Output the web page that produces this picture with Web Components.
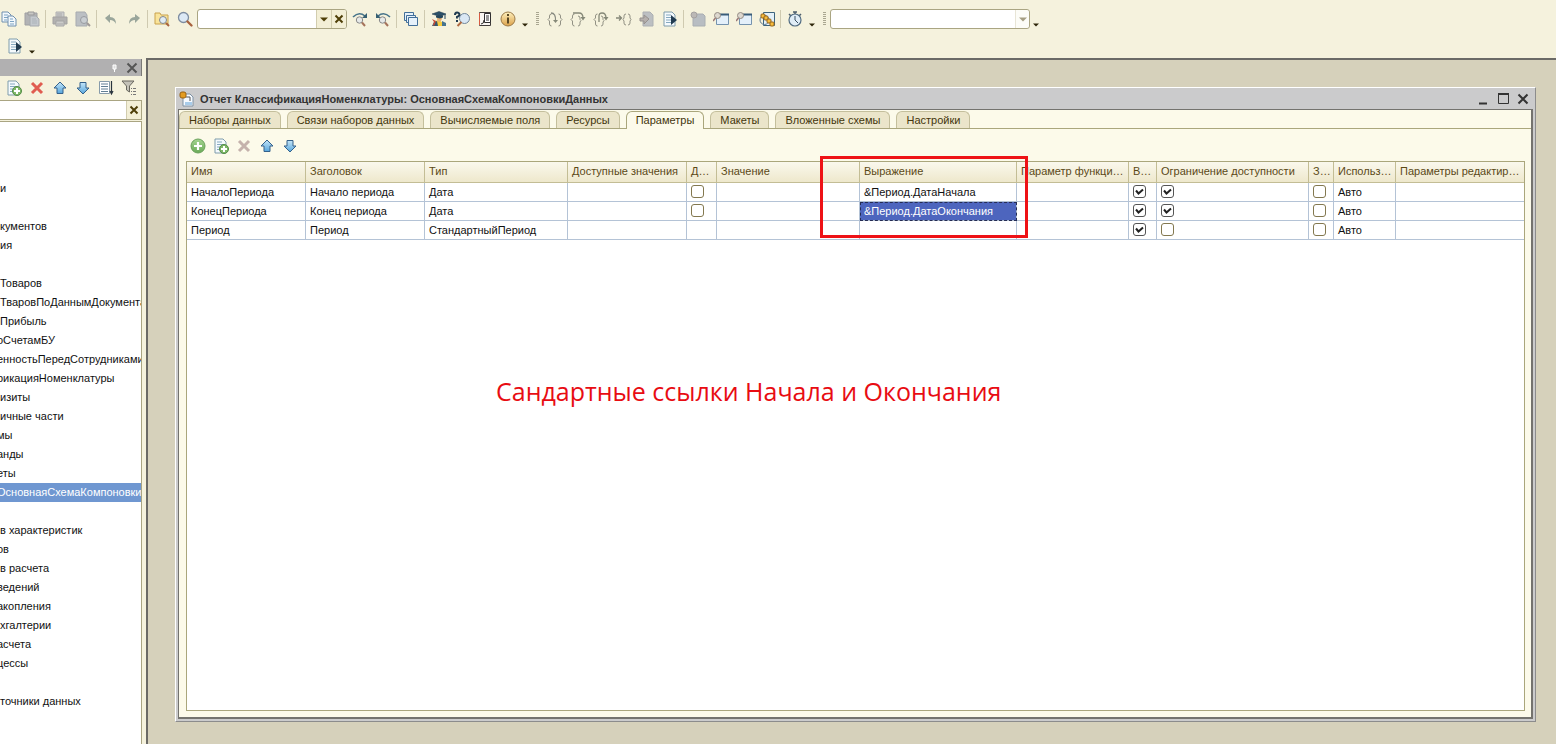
<!DOCTYPE html>
<html lang="ru">
<head>
<meta charset="utf-8">
<title>Конфигуратор</title>
<style>
html,body{margin:0;height:100%}
body{font:11px/13px "Liberation Sans",Arial,sans-serif;color:#111;background:#f5f2dd;overflow:hidden}
</style>
</head>
<body>
<app-shell></app-shell>
<script>
const doc='<path d="M2 1h8l3 3v11H2z" fill="#f5fafd" stroke="#7f9cab"/><path d="M4 4h5M4 6.500h7M4 9h7M4 11.500h7" stroke="#86a9c0"/>';
const plus='<circle cx="11" cy="11" r="4.500" fill="#7fb868" stroke="#528b45"/><path d="M11 8v6M8 11h6" stroke="#fff" stroke-width="2"/>';
const lens='<circle cx="6.500" cy="6.500" r="5" fill="#dce9f5" stroke="#7e8da0" stroke-width="1.300"/><path d="M10.500 10.500l4 4" stroke="#a8623e" stroke-width="2.300" stroke-linecap="round"/>';
const blueUp='M8 2l6 6h-3v5.500H5V8H2z', blueDown='M8 14L2 8h3V2.500h6V8h3z';
const grad='<defs><linearGradient id="b" x2="0" y2="1"><stop stop-color="#c5e6f9"/><stop offset="1" stop-color="#56a5dc"/></linearGradient><linearGradient id="g" x2="0" y2="1"><stop stop-color="#a5d491"/><stop offset="1" stop-color="#6aaa57"/></linearGradient><linearGradient id="o" x2="0" y2="1"><stop stop-color="#fdf0bd"/><stop offset="1" stop-color="#dca24a"/></linearGradient></defs>';
const smallLens='<circle cx="7.500" cy="9" r="3.200" fill="#e6e9e8" stroke="#888"/><path d="M10 11.500l3 3.500" stroke="#a5735b" stroke-width="2"/>';
const braceL='<path d="M4.500 3Q2.500 3 2.500 5v2L1 8.500 2.500 10v3q0 2 2 2" stroke="#929184" fill="none"/>';
const braceR='<path d="M11.500 3q2 0 2 2v2L15 8.500 13.500 10v3q0 2-2 2" stroke="#929184" fill="none"/>';
const braceMid='<path d="M8 5q2 0 2 2v1.500L11 9.500 10 11v2q0 2-2 2" stroke="#929184" fill="none"/>';
const winLens='<path d="M3.500 3.500h12v10h-12z" fill="#e4f0fa" stroke="#7593ae"/><path d="M4 3.500h12" stroke="#395c79" stroke-width="2"/><circle cx="4.500" cy="4.500" r="3" fill="#ddd8cf" stroke="#948c84"/><path d="M2.500 7L0 10" stroke="#977" stroke-width="1.500"/>';
const ICONS={
copy:'<path d="M1 1h6l3 3v7H1z" fill="#f2f8fc" stroke="#6f8fae"/><path d="M3 4h4M3 6.500h4M3 9h3" stroke="#7ca3c3"/><path d="M7 5h5l3 3v7H7z" fill="#f2f8fc" stroke="#6f8fae"/><path d="M9 8h3M9 10.500h4M9 13h4" stroke="#7ca3c3"/>',
paste:'<path d="M1 2h12v12H1z" fill="#b2b3b5" stroke="#9fa0a2"/><path d="M4 1h6v3H4z" fill="#c8c8c5" stroke="#999"/><path d="M6 5h6l3 3v7H6z" fill="#c3c8cd" stroke="#a6aaae"/><path d="M8 8h4M8 10h5M8 12h5" stroke="#acb3b9"/>',
print:'<path d="M4 1h8v6H4z" fill="#ccc" stroke="#b0b0b0"/><path d="M1 6h14v7H1z" fill="#b2b1b0" stroke="#a3a2a1"/><path d="M4 10h8v5H4z" fill="#ccccca" stroke="#a5a5a5"/><path d="M5 3h5M5 5h5M5 13h6" stroke="#a9a9a9"/>',
preview:'<path d="M1 1h9l2 3v11H1z" fill="#bbbfc3" stroke="#a7abaf"/><circle cx="9" cy="9" r="3.500" fill="#c8cdd1" stroke="#989ba0"/><path d="M12 12l3 3" stroke="#a09a98" stroke-width="2"/>',
undo:'<path d="M2 7l5-4v3q6 0 6 7-2-4-6-4v3z" fill="#9aa69b"/>',
redo:'<path d="M14 7L9 3v3q-6 0-6 7 2-4 6-4v3z" fill="#9aa69b"/>',
folder:'<path d="M1 13V2h5l1 2h7v9z" fill="#f9e49a" stroke="#c9a24c"/><circle cx="9" cy="9" r="3.500" fill="#e0ecf4" stroke="#83868c"/><path d="M12 12l3 3" stroke="#a8623e" stroke-width="2"/>',
zoom:lens,
next:'<path d="M1 6q6-6 12-1" fill="none" stroke="#47748a" stroke-width="1.600"/><path d="M15 2v5h-5z" fill="#355f72"/>'+smallLens,
prev:'<path d="M15 6Q9 0 3 5" fill="none" stroke="#47748a" stroke-width="1.600"/><path d="M1 2v5h5z" fill="#355f72"/>'+smallLens,
windows:'<g fill="#e6f1fa" stroke="#426f99"><path d="M1.500 1.500h9v8h-9z"/><path d="M3.500 4.500h9v7h-9z"/><path d="M5.500 6.500h9v8h-9z"/></g>',
scholar:'<path d="M2 15l2-5 4-1 4 3v3z" fill="#f6cb3e"/><path d="M1 15l2-4 3-1 1 5z" fill="#36576d"/><path d="M1 8l4 2-2 5-1-1 1-3z" fill="#c94b38"/><path d="M11 10l4 2v3h-4z" fill="#46748f"/><path d="M6 4h5v4q-1 3-3 3T6 7z" fill="#e3b27c"/><path d="M1 3l7-2.500L15 3 9 5.500z" fill="#2c5069" stroke="#183245" stroke-width=".5"/><path d="M5 4.500v2l4 1 3-1v-2" fill="#24465c"/><path d="M14 3v5" stroke="#24465c"/>',
help:'<circle cx="10.500" cy="7.500" r="5" fill="#dae8f4" stroke="#71869a"/><path d="M7.500 11l-4 4" stroke="#b16b42" stroke-width="2"/><path d="M1 4q0-2.500 2-2.500T5.500 3.500Q5.500 5 3 6v1.500M3 9v2" fill="none" stroke="#1f3a50" stroke-width="2"/>',
book:'<path d="M2.500 1.500h11v13h-11z" fill="#f9f6f2" stroke="#403c3a"/><path d="M2.500 2v12" stroke="#d85b42"/><path d="M7.500 2.500h6v9h-6z" fill="#fff" stroke="#303030"/><path d="M9 5h3M9 7h3M9 9h3M4 13q3 0 3-4" stroke="#303030" fill="none"/>',
info:'<circle cx="8" cy="8" r="7" fill="url(#o)" stroke="#9c7b48"/><path d="M8 3v2M8 6.500V12.500" stroke="#594824" stroke-width="2"/>',
into:braceL+braceR+'<path d="M4 2q5 0 4.500 8" fill="none" stroke="#888a80" stroke-width="1.300"/><path d="M6 9h5l-2.500 3z" fill="#858878"/>',
over:braceL+braceMid+'<path d="M3 2h6q4 0 4 5" fill="none" stroke="#858878" stroke-width="1.300"/><path d="M10.500 6h5L13 9.500z" fill="#858878"/>',
out:braceL+braceMid+'<path d="M6 11V5q0-3 3-3 4 0 4 5" fill="none" stroke="#858878" stroke-width="1.300"/><path d="M10.500 6h5L13 9.500z" fill="#858878"/>',
cursor:'<path d="M0 7h5M3 4.500L5.500 7 3 9.500" stroke="#858878" fill="none" stroke-width="1.300"/><path d="M10 3Q8 3 8 5v2L7 8.500 8 10v2q0 2 2 2M12 3q2 0 2 2v2l1 1.500-1 1.500v2q0 2-2 2" stroke="#929184" fill="none"/>',
docback:'<path d="M4 1h7l3 3v11H4z" fill="#bcbfc2" stroke="#adb0b3"/><path d="M5 4l5 4-5 5v-3H1V7h4z" fill="#b5afac" stroke="#96918e"/>',
run:doc+'<path d="M9 4l6 5-6 5z" fill="#213b50"/>',
docgray:'<path d="M3 3h10l2 2v10H3z" fill="#b8bdc2" stroke="#a9aeb2"/><circle cx="4" cy="4" r="3" fill="#bbb8b6" stroke="#a4a1a0"/>',
win1:winLens, win2:winLens,
chain:'<path d="M4.500 1.500h11v13h-11z" fill="#e4f0f7" stroke="#3d647d"/><circle cx="5.500" cy="9" r="4.500" fill="none" stroke="#5b7890"/><g fill="#f6bd3d" stroke="#96651d"><rect x="2" y="3" width="4" height="4" rx="1"/><rect x="5" y="5" width="4" height="4" rx="1"/><rect x="8" y="8" width="4" height="4" rx="1"/><rect x="11" y="11" width="4" height="4" rx="1"/></g>',
timer:'<path d="M6 1h4M8 1v3M2 3l2 2M14 3l-2 2" stroke="#4c5d6b" stroke-width="1.500"/><circle cx="8" cy="9" r="6" fill="#e0edf7" stroke="#526c82" stroke-width="1.200"/><path d="M8 5v4l3 3" fill="none" stroke="#384f62"/>',
docadd:doc+plus,
add:'<circle cx="8" cy="8" r="7" fill="url(#g)" stroke="#6aa15c"/><path d="M8 4v8M4 8h8" stroke="#fff" stroke-width="2.200"/>',
del:'<path d="M3 3l10 10M13 3L3 13" stroke="#e05c50" stroke-width="3"/>',
delgray:'<path d="M3 3l10 10M13 3L3 13" stroke="#c5b2ac" stroke-width="3"/>',
up:'<path d="'+blueUp+'" fill="url(#b)" stroke="#34618b"/>',
down:'<path d="'+blueDown+'" fill="url(#b)" stroke="#34618b"/>',
sort:'<path d="M1.500 1.500h10v12h-10z" fill="#fff" stroke="#879baa"/><path d="M3 4h7M3 6.500h7M3 9h7M3 11.500h7" stroke="#627f94"/><path d="M13.500 1v12M12 11l1.500 3 1.500-3" stroke="#29343e" fill="none" stroke-width="1.200"/>',
filter:'<path d="M1 1h12L8.500 6v6L5.500 10V6z" fill="#c4c2b8" stroke="#68675e"/><path d="M10 8.500h1M12 8.500h3M10 11.500h1M12 11.500h3M10 14.500h1M12 14.500h3" stroke="#777"/>',
window:'<path d="M4 3h7l3 3v9H4z" fill="#f6faff" stroke="#7e92a5"/><path d="M6 11h7v3H6z" fill="#a8ccea"/><rect x="1" y="1" width="6" height="6" rx="2" fill="#e39b20" stroke="#99610f"/><path d="M7 6h4v4" stroke="#555" fill="none"/>',
close:'<path d="M3.500 3.500l9 9M12.500 3.500l-9 9" stroke="currentColor" stroke-width="2"/>',
x:'<path d="M4.500 4.500l7 7M11.500 4.500l-7 7" stroke="#4e3f08" stroke-width="2"/>',
min:'<path d="M4 12.500h8" stroke="currentColor" stroke-width="2"/>',
max:'<path d="M3.500 3.500h10v9h-10z" fill="none" stroke="currentColor"/><path d="M3 3h11" stroke="currentColor" stroke-width="2"/>',
pin:'<path d="M7 5h3v4H7zM8.500 9v3" fill="#ddd" stroke="#fff"/>',
caret:'<path d="M4 6.500h8L8 10.500z" fill="#4e3f08"/>',
more:'<path d="M5 12.500h6L8 15.500z" fill="#2d2509"/>'
};
function define(name,html,after){
  const t=document.createElement('template');t.innerHTML=html;
  customElements.define(name,class extends HTMLElement{
    connectedCallback(){
      if(this.shadowRoot)return;
      this.attachShadow({mode:'open'}).append(t.content.cloneNode(true));
      if(after)after(this,this.shadowRoot);
    }
  });
}
define('ui-icon','<style>:host{display:block;width:16px;height:16px}svg{display:block}</style><div></div>',(el,r)=>{
  r.querySelector('div').innerHTML='<svg width="16" height="16" viewBox="0 0 16 16" fill="none" aria-hidden="true">'+grad+ICONS[el.getAttribute('name')]+'</svg>';
});
define('tool-button','<style>:host{display:block;flex:none;width:23px;height:22px}:host([narrow]){width:12px}button{all:unset;display:flex;width:100%;height:100%;align-items:center;justify-content:center}ui-icon{flex:none}</style><button type="button"></button>',(el,r)=>{
  const b=r.querySelector('button');b.setAttribute('aria-label',el.getAttribute('label')||el.getAttribute('icon'));
  b.innerHTML='<ui-icon name="'+el.getAttribute('icon')+'"></ui-icon>';
});
define('tool-separator','<style>:host{display:block;flex:none;width:1px;height:18px;margin:0 2px;background:#cfcab0}</style>');
define('tool-grip','<style>:host{display:block;flex:none;width:3px;height:14px;margin:0 4px 0 5px;background:repeating-linear-gradient(#a9a690 0 1px,transparent 1px 2px)}</style>');
define('search-combo',`<style>
:host{display:flex;box-sizing:border-box;flex:none;width:150px;height:20px;border:1px solid #aaa582;border-radius:3px;background:#fff;overflow:hidden}
:host([flat]){width:auto;border-radius:0;border-left:0}
input{flex:1;min-width:0;border:0;padding:0 4px;font:inherit;background:none;outline:0}
button{all:unset;display:flex;align-items:center;justify-content:center;width:14px;border-left:1px solid #d2cdaf;background:#f3efd6}
ui-icon{flex:none}:host([flat]) .drop{display:none}
</style><input type="text" aria-label="Поиск"><button class="drop" type="button" aria-label="Список"><ui-icon name="caret"></ui-icon></button><button type="button" aria-label="Очистить"><ui-icon name="x"></ui-icon></button>`);
define('config-select',`<style>:host{display:block;position:relative;flex:none;width:200px;height:20px}
select{appearance:none;box-sizing:border-box;width:100%;height:100%;border:1px solid #aaa582;border-radius:3px;background:#fff;font:inherit;display:block}
i{position:absolute;right:1px;top:1px;bottom:1px;width:13px;border-left:1px solid #d2cdaf;pointer-events:none;display:flex;align-items:center;justify-content:center;opacity:.5;background:#fbfaf0;border-radius:0 3px 3px 0}ui-icon{flex:none}</style>
<select aria-label="Процедура"><option></option></select><i><ui-icon name="caret"></ui-icon></i>`);
define('main-toolbar','<style>:host{display:block;height:58px;overflow:hidden;background:#f5f2dd}nav{display:flex;align-items:center;height:38px;margin-left:-3px}nav+nav{height:16px;margin-left:3px}search-combo{margin:0 1px}</style><nav class="a"></nav><nav><tool-button icon="run"></tool-button><tool-button icon="more" narrow></tool-button></nav>',(el,r)=>{
  r.querySelector('.a').innerHTML='copy paste | print preview | undo redo | folder zoom [] next prev | windows | scholar help book info . : into over out cursor docback run | docgray win1 win2 chain | timer . : <> .'.split(' ').map(k=>
    k==='|'?'<tool-separator></tool-separator>':k===':'?'<tool-grip></tool-grip>':k==='.'?'<tool-button icon="more" narrow></tool-button>':k==='[]'?'<search-combo></search-combo>':k==='<>'?'<config-select></config-select>':'<tool-button icon="'+k+'"></tool-button>').join('');
});
/* A leading "<" marks a row whose first letter is partly scrolled out. */
const TREE=['','','','и','','кументов','ия','','Товаров','ТваровПоДаннымДокумента','Прибыль','<оСчетамБУ','<енностьПередСотрудниками','<рикацияНоменклатуры','изиты','ичные части','<мы','<анды','<еты','<ОсновнаяСхемаКомпоновкиДанных','','в характеристик','<ов','в расчета','<ведений','<акопления','хгалтерии','<асчета','<цессы','','точники данных'];
define('config-tree',`<style>
:host{display:flex;flex-direction:column;min-width:0;background:#f5f2dd}
header{display:flex;justify-content:flex-end;align-items:center;height:17px;background:#b1b0b1;margin-top:1px;border-right:1px solid #7b7a76;color:#555}
header tool-button{width:18px;height:18px}
nav{display:flex;align-items:center;height:24px;padding-left:2px}
ul{flex:1;min-height:0;overflow:hidden;list-style:none;margin:1px 0 0;padding:0;background:#fff;border:solid #aaa582;border-width:1px 1px 0 0}
li{height:19px;line-height:19px;white-space:nowrap;overflow:hidden}
li.cut{text-indent:-3px}
li.sel{background:#6f97d1;color:#fff}
</style>
<header><tool-button icon="pin"></tool-button><tool-button icon="close"></tool-button></header>
<nav><tool-button icon="docadd"></tool-button><tool-button icon="del"></tool-button><tool-button icon="up"></tool-button><tool-button icon="down"></tool-button><tool-button icon="sort"></tool-button><tool-button icon="filter"></tool-button></nav>
<search-combo flat></search-combo><ul></ul>`,(el,r)=>{
  TREE.forEach((t,i)=>{const li=document.createElement('li');li.textContent=t.replace('<','');
    if(t[0]==='<')li.classList.add('cut');if(i===19)li.classList.add('sel');r.querySelector('ul').append(li)});
});
define('tab-strip',`<style>:host{display:flex;gap:6px;height:19px;box-sizing:border-box;padding-top:1px;border-bottom:1px solid #aaa67c;background:#fcfaea}
button{all:unset;box-sizing:border-box;height:17px;padding:0 9px;line-height:15px;border:1px solid #c4bf9c;border-bottom:0;border-radius:6px 6px 0 0;background:#ebe5ca;color:#43350c;white-space:nowrap}
button[aria-selected=true]{height:18px;background:#fcfaea;border-color:#aaa67c}</style>`,(el,r)=>{
  ['Наборы данных','Связи наборов данных','Вычисляемые поля','Ресурсы','Параметры','Макеты','Вложенные схемы','Настройки'].forEach((t,i)=>{
    const b=document.createElement('button');b.type='button';b.role='tab';b.setAttribute('aria-selected',i===4);b.textContent=t;r.append(b)});
});
const COLS=[['Имя',119],['Заголовок',119],['Тип',143],['Доступные значения',119],['Д…',30],['Значение',143],['Выражение',157],['Параметр функци…',112],['В…',28],['Ограничение доступности',152],['З…',25],['Использ…',62],['Параметры редактир…',0]];
const ROWS=[
['НачалоПериода','Начало периода','Дата','',false,'','&Период.ДатаНачала','',true,true,false,'Авто',''],
['КонецПериода','Конец периода','Дата','',false,'','&Период.ДатаОкончания','',true,true,false,'Авто',''],
['Период','Период','СтандартныйПериод','','','','','',true,false,false,'Авто','']];
define('param-table',`<style>
:host{display:block;position:relative;background:#fff;border:1px solid #aaa67c}
table{width:100%;table-layout:fixed;border-collapse:separate;border-spacing:0}
th,td{box-sizing:border-box;padding:0 0 0 4px;text-align:left;font-weight:400;white-space:nowrap;border:solid #b4c3d6;border-width:0 1px 1px 0}
th:last-child,td:last-child{border-right:0}
th{height:21px;padding-bottom:2px;border-color:#c3bd95;background:linear-gradient(#faf8ed,#eee8cc);color:#5b4917}
td{height:19px;line-height:18px}
td.sel{background:#4d65be;color:#fff;outline:1px dashed #252c54;outline-offset:-1px}
input{appearance:none;display:block;box-sizing:border-box;width:13px;height:13px;margin:0 0 2px;border:1px solid #83784f;border-radius:3px;background:#fff}
input:checked{border-color:#555;background:#fff url('data:image/svg+xml,<svg xmlns="http://www.w3.org/2000/svg" viewBox="0 0 11 11"><path d="M2 4.500l2.500 3L9 3.500" fill="none" stroke="%23222" stroke-width="2"/></svg>')}
.mark{position:absolute;left:633px;top:-6px;width:202px;height:76px;border:3px solid #ee1216;pointer-events:none}
</style><table><colgroup></colgroup><thead><tr></tr></thead><tbody></tbody></table><div class="mark"></div>`,(el,r)=>{
  r.querySelector('colgroup').innerHTML=COLS.map(c=>c[1]?'<col style="width:'+c[1]+'px">':'<col>').join('');
  r.querySelector('thead tr').innerHTML=COLS.map(c=>'<th scope="col">'+c[0]+'</th>').join('');
  ROWS.forEach((row,i)=>{const tr=document.createElement('tr');
    row.forEach((v,j)=>{const td=document.createElement('td');
      if(typeof v==='boolean'){const c=document.createElement('input');c.type='checkbox';c.checked=v;c.setAttribute('aria-label',COLS[j][0]);td.append(c)}else td.textContent=v;
      if(i===1&&j===6)td.className='sel';tr.append(td)});
    r.querySelector('tbody').append(tr)});
});
define('schema-window',`<style>
:host{position:relative;display:flex;flex-direction:column;box-sizing:border-box;border:1px solid;border-color:#fff #8c8c8c #8c8c8c #fff;padding:0 2px 2px;background:#cbcbcc}
header{display:flex;align-items:center;height:21px;color:#333}
h1{flex:1;margin:0 0 0 5px;padding-top:2px;font:bold 11px/13px "Liberation Sans",Arial,sans-serif}
header>ui-icon{margin-left:1px}header tool-button{width:20px;height:22px}
.body{flex:1;min-height:0;display:flex;flex-direction:column;border:solid #74736e;border-width:1px 2px 2px 1px;background:#fcfaea}
nav{display:flex;align-items:center;height:32px;padding:2px 7px 0;box-sizing:border-box}
nav tool-button{height:32px}
param-table{flex:1;margin:0 6px 6px 7px}
.note{position:absolute;left:320px;top:286px;margin:0;font:25px/34px "Open Sans","Noto Sans",sans-serif;color:#e80c12;white-space:nowrap}
</style>
<header><ui-icon name="window"></ui-icon><h1>Отчет КлассификацияНоменклатуры: ОсновнаяСхемаКомпоновкиДанных</h1><tool-button icon="min"></tool-button><tool-button icon="max"></tool-button><tool-button icon="close"></tool-button></header>
<div class="body"><tab-strip></tab-strip><nav><tool-button icon="add"></tool-button><tool-button icon="docadd"></tool-button><tool-button icon="delgray"></tool-button><tool-button icon="up"></tool-button><tool-button icon="down"></tool-button></nav><param-table></param-table></div>
<p class="note">Сандартные ссылки Начала и Окончания</p>`);
define('app-shell',`<style>:host{display:flex;flex-direction:column;height:100vh}
main{flex:1;min-height:0;display:grid;grid-template-columns:142px minmax(0,1fr);column-gap:4px}
section{display:flex;border:solid #6b6a66;border-width:2px 0 0 2px;background:#d6d1bb;padding:27px 20px 22px 27px}
schema-window{flex:1;min-width:0}</style>
<main-toolbar></main-toolbar><main><config-tree></config-tree><section><schema-window></schema-window></section></main>`);
</script>
</body>
</html>
